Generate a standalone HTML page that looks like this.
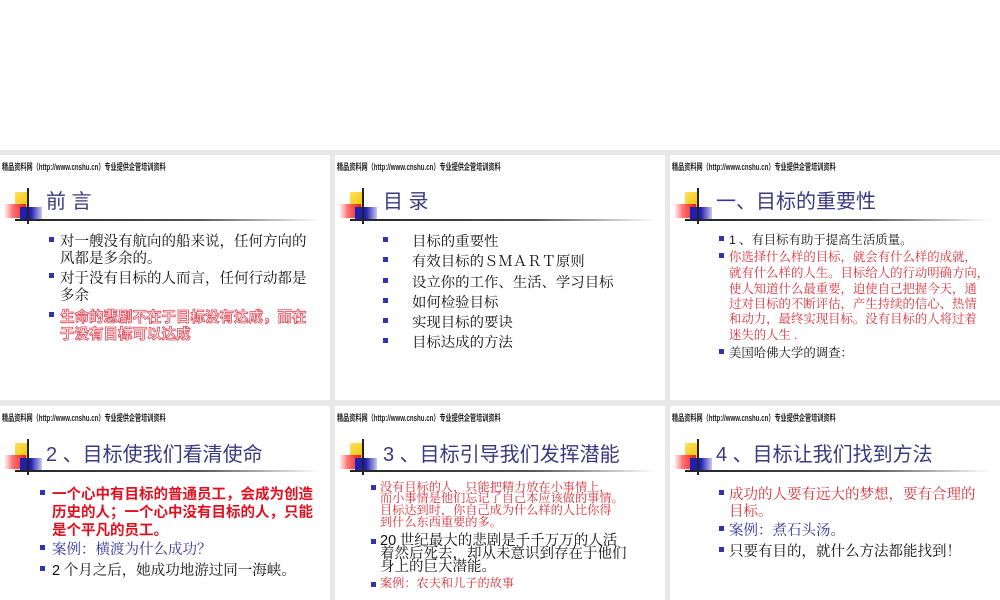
<!DOCTYPE html>
<html><head><meta charset="utf-8"><style>
*{margin:0;padding:0;box-sizing:border-box}
body{width:1000px;height:600px;background:#fff;position:relative;overflow:hidden;font-family:"Liberation Serif","Noto Serif CJK SC",serif}
.bg{position:absolute;left:0;top:150px;width:1000px;height:450px;background:#e8e8e8}
.p{position:absolute;background:#fff;overflow:hidden}
.hd{position:absolute;left:2px;top:5px;font-family:"Liberation Sans","Noto Sans CJK SC",sans-serif;font-size:9px;font-weight:bold;color:#222;white-space:nowrap;transform:scaleX(0.68);transform-origin:0 0}
.ttl{position:absolute;font-family:"Liberation Sans","Noto Sans CJK SC",sans-serif;font-size:20px;color:#3a3a80;white-space:nowrap;line-height:24px}
.l{position:absolute;white-space:nowrap;color:#111}
.b{position:absolute;width:5px;height:5px;background:#3333aa}
.y{position:absolute;left:15px;width:14px;height:15px;background:linear-gradient(135deg,#ffe060,#f5c400)}
.r{position:absolute;left:4px;width:22px;height:14px;background:linear-gradient(90deg,#fff 0%,#ff6060 40%,#e01010 100%);opacity:.9}
.bl{position:absolute;left:20px;width:22px;height:14px;background:linear-gradient(90deg,#2020b0 50%,#c8c8ee 100%)}
.v{position:absolute;left:27px;width:1.5px;height:36px;background:#222}
.h{position:absolute;left:15px;width:305px;height:1.5px;background:linear-gradient(90deg,#222 0%,#555 60%,#fff 100%)}
.red{color:#d8303a}
.blu{color:#3333a0}
</style></head><body>
<div class="bg"></div>

<div class="p" style="left:0;top:155px;width:330px;height:245px">
<div class="hd">精品资料网（http://www.cnshu.cn）专业提供企管培训资料</div>
<div class="y" style="top:37px"></div><div class="r" style="top:49px"></div><div class="bl" style="top:52px"></div><div class="v" style="top:33px"></div><div class="h" style="top:64px"></div>
<div class="ttl" style="left:46px;top:35px">前 言</div>
<div class="b" style="left:49px;top:82px"></div>
<div class="l" style="left:60px;top:75px;font-size:14.5px">对一艘没有航向的船来说，任何方向的</div>
<div class="l" style="left:60px;top:92px;font-size:14.5px">风都是多余的。</div>
<div class="b" style="left:49px;top:118px"></div>
<div class="l" style="left:60px;top:112px;font-size:14.5px">对于没有目标的人而言，任何行动都是</div>
<div class="l" style="left:60px;top:129px;font-size:14.5px">多余</div>
<div class="b" style="left:49px;top:157px"></div>
<div class="l" style="left:60px;top:151px;font-size:14.5px;font-weight:bold;color:#fff;-webkit-text-stroke:0.8px #e04050;font-family:'Liberation Sans','Noto Sans CJK SC',sans-serif">生命的悲剧不在于目标没有达成，而在</div>
<div class="l" style="left:60px;top:168px;font-size:14.5px;font-weight:bold;color:#fff;-webkit-text-stroke:0.8px #e04050;font-family:'Liberation Sans','Noto Sans CJK SC',sans-serif">于没有目标可以达成</div>
</div>

<div class="p" style="left:335px;top:155px;width:330px;height:245px">
<div class="hd">精品资料网（http://www.cnshu.cn）专业提供企管培训资料</div>
<div class="y" style="top:37px"></div><div class="r" style="top:49px"></div><div class="bl" style="top:52px"></div><div class="v" style="top:33px"></div><div class="h" style="top:64px"></div>
<div class="ttl" style="left:48px;top:35px">目 录</div>
<div class="b" style="left:48px;top:82px"></div><div class="l" style="left:77px;top:75px;font-size:14.4px">目标的重要性</div>
<div class="b" style="left:48px;top:102px"></div><div class="l" style="left:77px;top:95px;font-size:14.4px">有效目标的ＳＭＡＲＴ原则</div>
<div class="b" style="left:48px;top:123px"></div><div class="l" style="left:77px;top:116px;font-size:14.4px">设立你的工作、生活、学习目标</div>
<div class="b" style="left:48px;top:143px"></div><div class="l" style="left:77px;top:136px;font-size:14.4px">如何检验目标</div>
<div class="b" style="left:48px;top:163px"></div><div class="l" style="left:77px;top:156px;font-size:14.4px">实现目标的要诀</div>
<div class="b" style="left:48px;top:183px"></div><div class="l" style="left:77px;top:176px;font-size:14.4px">目标达成的方法</div>
</div>

<div class="p" style="left:670px;top:155px;width:330px;height:245px">
<div class="hd">精品资料网（http://www.cnshu.cn）专业提供企管培训资料</div>
<div class="y" style="top:37px"></div><div class="r" style="top:49px"></div><div class="bl" style="top:52px"></div><div class="v" style="top:33px"></div><div class="h" style="top:64px"></div>
<div class="ttl" style="left:46px;top:35px">一、目标的重要性</div>
<div class="b" style="left:49px;top:81px"></div><div class="l" style="left:59px;top:75px;font-size:12.4px"><span style="font-family:'Liberation Sans',sans-serif">1</span> 、有目标有助于提高生活质量。</div>
<div class="b" style="left:49px;top:98px"></div>
<div class="l red" style="left:59px;top:92px;font-size:12.4px">你选择什么样的目标，就会有什么样的成就，</div>
<div class="l red" style="left:59px;top:108px;font-size:12.4px">就有什么样的人生。目标给人的行动明确方向，</div>
<div class="l red" style="left:59px;top:124px;font-size:12.4px">使人知道什么最重要，迫使自己把握今天，通</div>
<div class="l red" style="left:59px;top:139px;font-size:12.4px">过对目标的不断评估，产生持续的信心、热情</div>
<div class="l red" style="left:59px;top:154px;font-size:12.4px">和动力，最终实现目标。没有目标的人将过着</div>
<div class="l red" style="left:59px;top:170px;font-size:12.4px">迷失的人生 .</div>
<div class="b" style="left:49px;top:194px"></div><div class="l" style="left:59px;top:188px;font-size:12.4px">美国哈佛大学的调查：</div>
</div>

<div class="p" style="left:0;top:406px;width:330px;height:194px">
<div class="hd">精品资料网（http://www.cnshu.cn）专业提供企管培训资料</div>
<div class="y" style="top:37px"></div><div class="r" style="top:49px"></div><div class="bl" style="top:52px"></div><div class="v" style="top:33px"></div><div class="h" style="top:64px"></div>
<div class="ttl" style="left:46px;top:37px">2 、目标使我们看清使命</div>
<div class="b" style="left:40px;top:84px"></div>
<div class="l" style="left:52px;top:77px;font-size:14.5px;font-weight:bold;color:#e01020;font-family:'Liberation Sans','Noto Sans CJK SC',sans-serif">一个心中有目标的普通员工，会成为创造</div>
<div class="l" style="left:52px;top:95px;font-size:14.5px;font-weight:bold;color:#e01020;font-family:'Liberation Sans','Noto Sans CJK SC',sans-serif">历史的人；一个心中没有目标的人，只能</div>
<div class="l" style="left:52px;top:113px;font-size:14.5px;font-weight:bold;color:#e01020;font-family:'Liberation Sans','Noto Sans CJK SC',sans-serif">是个平凡的员工。</div>
<div class="b" style="left:40px;top:139px"></div><div class="l blu" style="left:52px;top:132px;font-size:14.5px">案例：横渡为什么成功？</div>
<div class="b" style="left:40px;top:160px"></div><div class="l" style="left:52px;top:153px;font-size:14.5px"><span style="font-family:'Liberation Sans',sans-serif">2</span> 个月之后，她成功地游过同一海峡。</div>
</div>

<div class="p" style="left:335px;top:406px;width:330px;height:194px">
<div class="hd">精品资料网（http://www.cnshu.cn）专业提供企管培训资料</div>
<div class="y" style="top:37px"></div><div class="r" style="top:49px"></div><div class="bl" style="top:52px"></div><div class="v" style="top:33px"></div><div class="h" style="top:64px"></div>
<div class="ttl" style="left:48px;top:37px">3 、目标引导我们发挥潜能</div>
<div class="b" style="left:36px;top:79px"></div>
<div class="l red" style="left:45px;top:75px;font-size:12.2px;line-height:12px">没有目标的人，只能把精力放在小事情上，</div>
<div class="l red" style="left:45px;top:86px;font-size:12.2px;line-height:12px">而小事情是他们忘记了自己本应该做的事情。</div>
<div class="l red" style="left:45px;top:98px;font-size:12.2px;line-height:12px">目标达到时，你自己成为什么样的人比你得</div>
<div class="l red" style="left:45px;top:110px;font-size:12.2px;line-height:12px">到什么东西重要的多。</div>
<div class="b" style="left:36px;top:133px"></div>
<div class="l" style="left:45px;top:129px;font-size:14.5px;line-height:13px"><span style="font-family:'Liberation Sans',sans-serif">20</span> 世纪最大的悲剧是千千万万的人活</div>
<div class="l" style="left:45px;top:142px;font-size:14.5px;line-height:13px">着然后死去，却从未意识到存在于他们</div>
<div class="l" style="left:45px;top:155px;font-size:14.5px;line-height:13px">身上的巨大潜能。</div>
<div class="b" style="left:36px;top:176px"></div>
<div class="l red" style="left:45px;top:171px;font-size:12.2px;line-height:13px">案例：农夫和儿子的故事</div>
</div>

<div class="p" style="left:670px;top:406px;width:330px;height:194px">
<div class="hd">精品资料网（http://www.cnshu.cn）专业提供企管培训资料</div>
<div class="y" style="top:37px"></div><div class="r" style="top:49px"></div><div class="bl" style="top:52px"></div><div class="v" style="top:33px"></div><div class="h" style="top:64px"></div>
<div class="ttl" style="left:46px;top:37px">4 、目标让我们找到方法</div>
<div class="b" style="left:49px;top:84px"></div>
<div class="l red" style="left:59px;top:77px;font-size:14.5px">成功的人要有远大的梦想，要有合理的</div>
<div class="l red" style="left:59px;top:94px;font-size:14.5px">目标。</div>
<div class="b" style="left:49px;top:120px"></div><div class="l blu" style="left:59px;top:113px;font-size:14.5px">案例：煮石头汤。</div>
<div class="b" style="left:49px;top:141px"></div><div class="l" style="left:59px;top:134px;font-size:14.5px">只要有目的，就什么方法都能找到！</div>
</div>
</body></html>
